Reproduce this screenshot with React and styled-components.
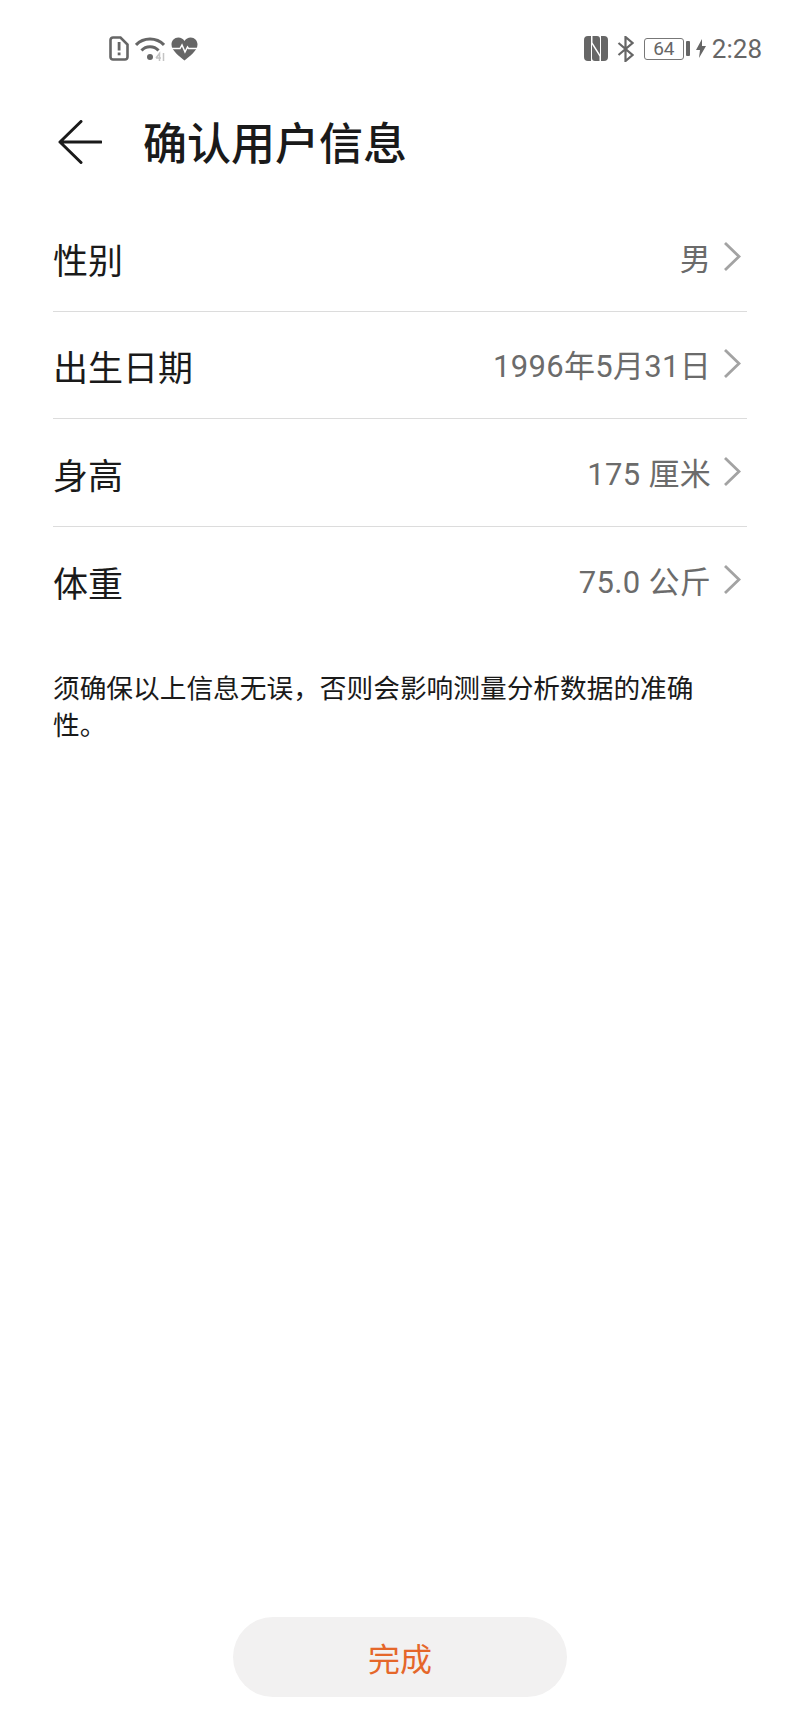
import React from 'react'
import styled, { createGlobalStyle } from 'styled-components'

const rows = [
    { label: '性别', value: '男' },
    { label: '出生日期', value: '1996年5月31日' },
    { label: '身高', value: '175 厘米' },
    { label: '体重', value: '75.0 公斤' },
]

export default function App() {
    return (
        <Page>
            <GlobalStyle />
            <StatusBar>
                <StatusGroup>
                    <SimAlertIcon />
                    <WifiIcon />
                    <HeartIcon />
                </StatusGroup>
                <StatusGroup>
                    <NfcIcon />
                    <BluetoothIcon />
                    <Battery>
                        <BatteryBody>64</BatteryBody>
                        <BatteryNub />
                    </Battery>
                    <BoltIcon />
                    <Clock>2:28</Clock>
                </StatusGroup>
            </StatusBar>

            <Header>
                <BackIcon />
                <Title>确认用户信息</Title>
            </Header>

            <List>
                {rows.map(r => (
                    <Row key={r.label}>
                        <Label>{r.label}</Label>
                        <Value>{r.value}</Value>
                        <ChevronIcon />
                    </Row>
                ))}
            </List>

            <Note>须确保以上信息无误，否则会影响测量分析数据的准确性。</Note>

            <Done>完成</Done>
        </Page>
    )
}

const SimAlertIcon = () => (
    <svg width="20" height="25" viewBox="0 0 20 25">
        <path d="M4 1.500h7.500l7 7V21a2.500 2.500 0 0 1-2.500 2.500H4A2.500 2.500 0 0 1 1.500 21V4A2.500 2.500 0 0 1 4 1.500z" fill="none" stroke="#666" strokeWidth="2.600" />
        <rect x="8.700" y="6" width="2.800" height="8.500" fill="#666" />
        <rect x="8.700" y="16.500" width="2.800" height="2.800" fill="#666" />
    </svg>
)

const WifiIcon = () => (
    <svg width="30" height="25" viewBox="0 0 30 25" style={{ marginLeft: 6 }}>
        <path d="M1 9C8.500 1 21.500 1 29 9" fill="none" stroke="#666" strokeWidth="3" />
        <path d="M6.500 14.500C11 9.500 19 9.500 23.500 14.500" fill="none" stroke="#666" strokeWidth="3" />
        <circle cx="15" cy="21" r="3" fill="#666" />
        <path d="M21 22l3.500-4.500V25M21 22h5M28.500 17v8" fill="none" stroke="#c4c4c4" strokeWidth="1.500" />
    </svg>
)

const HeartIcon = () => (
    <svg width="27" height="24" viewBox="0 0 27 24" style={{ marginLeft: 6 }}>
        <path d="M13.500 23.500C9 19.500 0.500 14 0.500 7.500 0.500 3.500 3.500 0.500 7.300 0.500c2.600 0 4.900 1.300 6.200 3.500 1.300-2.200 3.600-3.500 6.200-3.500 3.800 0 6.800 3 6.800 7 0 6.500-8.500 12-13 16z" fill="#666" />
        <path d="M1 11.500h8l2-3.500 3 7 2.500-5 1 1.500h8.500" fill="none" stroke="#fff" strokeWidth="1.500" />
    </svg>
)

const NfcIcon = () => (
    <svg width="24" height="25" viewBox="0 0 24 25">
        <path d="M4 0h3v25H4a4 4 0 0 1-4-4V4a4 4 0 0 1 4-4zM17 0h3a4 4 0 0 1 4 4v17a4 4 0 0 1-4 4h-3z" fill="#666" />
        <path d="M8.500 0h4.500c2 0 3 1 3 3v15.500L8.500 6.500zM15.500 25H11c-2 0-3-1-3-3V8.500l7.500 12z" fill="#666" />
    </svg>
)

const BluetoothIcon = () => (
    <svg width="17" height="26" viewBox="0 0 17 26" style={{ marginLeft: 9 }}>
        <path d="M1.500 7l14 12-7 6V1l7 6-14 12" fill="none" stroke="#666" strokeWidth="2.200" />
    </svg>
)

const BoltIcon = () => (
    <svg width="10" height="19" viewBox="0 0 10 19" style={{ marginLeft: 6 }}>
        <path d="M6 0L0 11h4l-1 8 7-12H6z" fill="#666" />
    </svg>
)

const BackIcon = () => (
    <svg width="44" height="44" viewBox="0 0 44 44">
        <path d="M23 1.500L2 22l21 20.500M2 22h41" fill="none" stroke="#1a1a1a" strokeWidth="3" strokeLinecap="round" strokeLinejoin="round" />
    </svg>
)

const ChevronIcon = () => (
    <svg width="18" height="31" viewBox="0 0 18 31" style={{ marginLeft: 12, marginBottom: 2 }}>
        <path d="M2 2l14 13.500L2 29" fill="none" stroke="#a3a3a3" strokeWidth="2.800" />
    </svg>
)

const GlobalStyle = createGlobalStyle`
    body {
        margin: 0;
        background: #fff;
        font-family: Roboto, "Noto Sans CJK SC", sans-serif;
    }
`

const Page = styled.div`
    display: flex;
    flex-direction: column;
    width: 800px;
    height: 1733px;
    background: #fff;
`

const StatusBar = styled.div`
    display: flex;
    justify-content: space-between;
    align-items: center;
    height: 25px;
    margin-top: 36px;
    padding: 0 38px 0 109px;
`

const StatusGroup = styled.div`
    display: flex;
    align-items: center;
`

const Battery = styled.div`
    display: flex;
    align-items: center;
    margin-left: 10px;
`

const BatteryBody = styled.div`
    width: 40px;
    height: 22px;
    box-sizing: border-box;
    border: 1.5px solid #777;
    border-radius: 3px;
    color: #666;
    font-size: 19px;
    line-height: 19px;
    text-align: center;
`

const BatteryNub = styled.div`
    width: 4px;
    height: 15px;
    margin-left: 2px;
    border-radius: 1px;
    background: #666;
`

const Clock = styled.span`
    margin-left: 6px;
    color: #666;
    font-size: 26px;
`

const Header = styled.div`
    display: flex;
    align-items: center;
    gap: 41px;
    height: 44px;
    margin-top: 59px;
    padding-left: 58px;
`

const Title = styled.h1`
    margin: 5px 0 0;
    color: #1a1a1a;
    font-size: 44px;
    font-weight: 500;
    line-height: 44px;
`

const List = styled.div`
    margin: 40px 53px 0 53px;
`

const Row = styled.div`
    display: flex;
    align-items: center;
    height: 107.500px;
    box-sizing: border-box;
    padding-right: 6px;
    border-bottom: 1px solid #dcdcdc;

    &:last-child {
        border-bottom: 0;
    }
`

const Label = styled.span`
    margin: 2px auto 0 0;
    color: #1a1a1a;
    font-size: 35px;
`

const Value = styled.span`
    margin-bottom: 2px;
    color: #6b6b6b;
    font-size: 31px;
    letter-spacing: 0.300px;
`

const Note = styled.p`
    width: 650px;
    margin: 37px 0 0 53px;
    color: #1a1a1a;
    font-size: 26.700px;
    line-height: 37px;
`

const Done = styled.button`
    align-self: center;
    width: 334px;
    height: 80px;
    margin-top: auto;
    margin-bottom: 36px;
    padding: 0;
    border: 0;
    border-radius: 40px;
    background: #f2f1f1;
    color: #e5672a;
    font-family: inherit;
    font-size: 32px;
`
